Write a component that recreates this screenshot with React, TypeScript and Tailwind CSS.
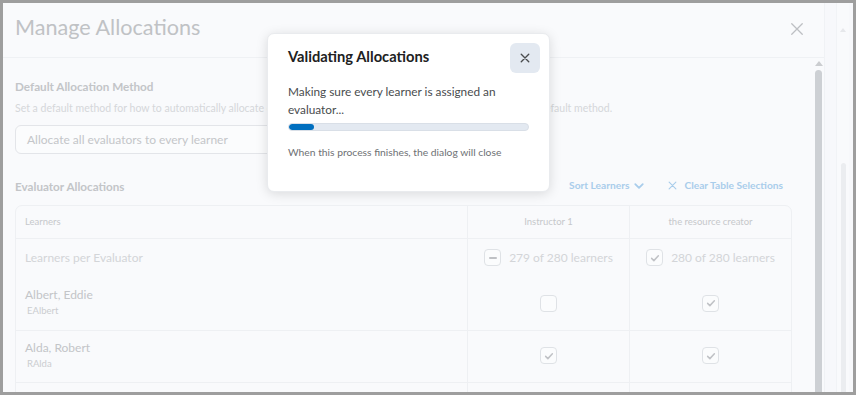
import React from "react";

function Check({ className }: { className?: string }) {
  return (
    <svg viewBox="0 0 16 16" className={className} fill="none" stroke="currentColor" strokeWidth={2} strokeLinecap="round" strokeLinejoin="round">
      <path d="M3.5 8.5l3 3L12.5 5" />
    </svg>
  );
}

function XIcon({ className, w = 1.6 }: { className?: string; w?: number }) {
  return (
    <svg viewBox="0 0 16 16" className={className} fill="none" stroke="currentColor" strokeWidth={w} strokeLinecap="round">
      <path d="M2 2l12 12M14 2L2 14" />
    </svg>
  );
}

function Chevron({ className }: { className?: string }) {
  return (
    <svg viewBox="0 0 16 16" className={className} fill="none" stroke="currentColor" strokeWidth={2.4} strokeLinecap="round" strokeLinejoin="round">
      <path d="M3 5.5l5 5 5-5" />
    </svg>
  );
}

function Box({ state }: { state: "on" | "off" | "mixed" }) {
  return (
    <span className="w-[17px] h-[17px] rounded-[4px] border border-[#dfe2e6] bg-[#fbfcfd] flex items-center justify-center text-[#c0c2c6] shrink-0">
      {state === "on" && <Check className="w-[12px] h-[12px]" />}
      {state === "mixed" && <span className="w-[8px] h-[2px] bg-[#bfc1c5] rounded-full" />}
    </span>
  );
}

const rows = [
  { name: "Albert, Eddie", user: "EAlbert", a: "off" as const, b: "on" as const },
  { name: "Alda, Robert", user: "RAlda", a: "on" as const, b: "on" as const },
];

export default function App() {
  return (
    <div className="w-[856px] h-[395px] bg-[#9e9e9e] p-[3px] font-[Lato,sans-serif] overflow-hidden">
      <div className="relative flex h-full bg-[#f9fafc] overflow-hidden">
        {/* Background modal */}
        <div className="w-[821px] shrink-0 flex flex-col h-full">
          <div className="h-[55px] shrink-0 flex items-center justify-between pl-[12px] pr-[20px] border-b border-[#eff1f4]">
            <h1 className="text-[21.6px] leading-[28px] text-[#c0c2c5] mb-[6px]">Manage Allocations</h1>
            <XIcon className="w-[14px] h-[14px] text-[#bdbfc3] mb-[2px]" w={1.5} />
          </div>
          <div className="flex flex-1 min-h-0">
            <div className="flex-1 min-w-0 pl-[12px] pr-[20px] pt-[19px] overflow-hidden">
              <h2 className="text-[11.7px] leading-[18px] font-bold text-[#c3c5c8]">Default Allocation Method</h2>
              <p className="mt-[5px] text-[10.5px] leading-[16px] text-[#d5d7da] whitespace-nowrap">
                Set a default method for how to automatically allocate evaluators. New learners are allocated evaluators using the default method.
              </p>
              <div className="mt-[9px] w-[420px] h-[29px] border border-[#e3e5e9] rounded-[6px] flex items-center pl-[11px] text-[12px] text-[#c4c6c9] bg-[#fbfcfd]">
                Allocate all evaluators to every learner
              </div>
              <div className="mt-[23px] flex items-center justify-between pr-[9px]">
                <h2 className="text-[11.7px] leading-[18px] font-bold text-[#c3c5c8]">Evaluator Allocations</h2>
                <div className="flex items-center text-[10.2px] font-bold text-[#a9cdeb]">
                  <span>Sort Learners</span>
                  <Chevron className="ml-[4px] w-[12px] h-[12px]" />
                  <XIcon className="ml-[23px] w-[9px] h-[9px]" w={2} />
                  <span className="ml-[7px]">Clear Table Selections</span>
                </div>
              </div>
              <div className="mt-[10px] border border-[#eef0f3] rounded-t-[7px]">
                <div className="grid grid-cols-[451px_162px_1fr] h-[33px] border-b border-[#eef0f3] text-[9.5px] text-[#c6c8cb]">
                  <div className="flex items-center pl-[9px]">Learners</div>
                  <div className="flex items-center justify-center border-l border-[#eef0f3]">Instructor 1</div>
                  <div className="flex items-center justify-center border-l border-[#eef0f3]">the resource creator</div>
                </div>
                <div className="grid grid-cols-[451px_162px_1fr] h-[39px] text-[12px] text-[#d3d5d8]">
                  <div className="flex items-center pl-[9px] pb-[2px]">Learners per Evaluator</div>
                  <div className="flex items-center justify-center gap-[8px] border-l border-[#eef0f3] pb-[2px]">
                    <Box state="mixed" />
                    <span>279 of 280 learners</span>
                  </div>
                  <div className="flex items-center justify-center gap-[8px] border-l border-[#eef0f3] pb-[2px]">
                    <Box state="on" />
                    <span>280 of 280 learners</span>
                  </div>
                </div>
                {rows.map((r, i) => (
                  <div
                    key={r.user}
                    className={`grid grid-cols-[451px_162px_1fr] h-[52px] ${i > 0 ? "border-t border-[#eef0f3]" : ""}`}
                  >
                    <div className="pl-[9px] pt-[9px]">
                      <div className="text-[12px] leading-[16px] text-[#c3c5c8]">{r.name}</div>
                      <div className="text-[9.5px] leading-[14px] text-[#cbcdd0] ml-[2px] mt-[1px]">{r.user}</div>
                    </div>
                    <div className="flex items-center justify-center border-l border-[#eef0f3] pb-[2px]">
                      <Box state={r.a} />
                    </div>
                    <div className="flex items-center justify-center border-l border-[#eef0f3] pb-[2px]">
                      <Box state={r.b} />
                    </div>
                  </div>
                ))}
                <div className="grid grid-cols-[451px_162px_1fr] h-[52px] border-t border-[#eef0f3]">
                  <div />
                  <div className="border-l border-[#eef0f3]" />
                  <div className="border-l border-[#eef0f3]" />
                </div>
              </div>
            </div>
            {/* modal scrollbar */}
            <div className="w-[12px] shrink-0 flex flex-col items-start">
              <span className="mt-[3px] ml-[2.5px] w-0 h-0 border-l-[4px] border-r-[4px] border-b-[5px] border-l-transparent border-r-transparent border-b-[#cbcdd0]" />
              <div className="mt-[4px] ml-[3px] w-[7px] flex-1 rounded-t-full bg-[#cdd0d4]" />
            </div>
          </div>
        </div>
        {/* Page strip */}
        <div className="flex-1 flex bg-[#f7f8fb] border-l border-[#f0f2f5]">
          <div className="w-[12px] shrink-0 border-r border-[#f1f3f6]" />
          <div className="w-[12px] flex flex-col items-center bg-[#f9fafc]">
            <span className="mt-[25px] w-0 h-0 border-l-[3px] border-r-[3px] border-b-[4px] border-l-transparent border-r-transparent border-b-[#e6e8eb]" />
            <div className="mt-[131px] w-[5px] flex-1 rounded-t-full bg-[#ebedf0]" />
          </div>
        </div>

        {/* Validating dialog */}
        <div className="absolute left-[264px] top-[30px] w-[283px] bg-white rounded-[7px] shadow-[0_2px_12px_rgba(0,0,0,0.13)] border border-[#e9ebee] pl-[20px] pr-[9px] pt-[9px] pb-[31px]">
          <div className="flex items-start justify-between">
            <h3 className="text-[14.7px] leading-[26px] font-bold text-[#202122]">Validating Allocations</h3>
            <button className="w-[30px] h-[30px] rounded-[6px] bg-[#e3e9f1] flex items-center justify-center text-[#494c4e]">
              <XIcon className="w-[10px] h-[10px]" w={2.2} />
            </button>
          </div>
          <div className="pr-[11px]">
            <p className="mt-[10px] text-[11.8px] leading-[18px] text-[#494c4e]">
              Making sure every learner is assigned an evaluator...
            </p>
            <div className="mt-[4px] h-[8px] rounded-full bg-[#e3e9f1] border border-[#d9dfe7] overflow-hidden">
              <div className="h-full w-[25px] rounded-full bg-[#006fbf]" />
            </div>
            <p className="mt-[13px] text-[10.3px] leading-[16px] text-[#6e7174]">
              When this process finishes, the dialog will close
            </p>
          </div>
        </div>
      </div>
    </div>
  );
}
